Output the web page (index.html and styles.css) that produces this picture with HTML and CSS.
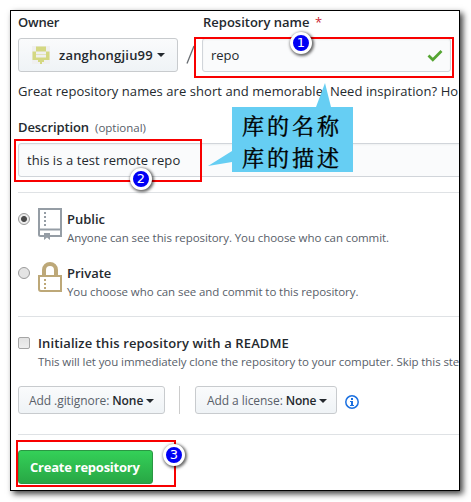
FILE: index.html
```html
<!DOCTYPE html>
<html lang="en">
<head>
<meta charset="utf-8">
<title>Create a new repository</title>
<link rel="stylesheet" href="styles.css">
</head>
<body>
<div class="stage">
<main class="frame">
  <div class="labels"><span class="t-owner strong">Owner</span><span class="t-name strong">Repository name <i class="star">*</i></span></div>
  <div class="fields">
    <div class="btn owner">
      <svg class="avatar" width="20" height="20" viewBox="0 0 20 20"><path fill="#f0f0f0" d="M1 1h18v18H1z"/><path fill="#d4d882" d="M5 1.500h10v5H5zM1.500 6.500H5v3h10v-3h3.500V15H13v2h-2v2H9v-2H7v-2H1.500z"/><path fill="#f0f0f0" d="M5 10h10v2.500H5z"/></svg>
      <span class="t-user strong">zanghongjiu99</span><b class="caret"></b>
    </div>
    <svg class="slash" width="9" height="20" viewBox="0 0 9 20"><path d="M1 18.500 8 1" stroke="#666b70" stroke-width="1.300"/></svg>
    <div class="input name"><span class="t-repo">repo</span>
      <svg width="16" height="14" viewBox="0 0 16 14"><path d="m1.500 7.500 4.300 4.300L14.500 3" fill="none" stroke="#55a532" stroke-width="2.700"/></svg></div>
  </div>
  <p class="hint"><span class="t-hint">Great repository names are short and memorable. Need inspiration? Ho</span></p>
  <p class="desc-label"><span class="t-desc strong">Description</span><span class="t-opt">(optional)</span></p>
  <div class="input desc"><span class="t-test">this is a test remote repo</span></div>
  <hr class="rule r1">
  <div class="choice public">
    <i class="radio on"></i>
    <svg width="24" height="32" viewBox="0 0 24 32" fill="none" stroke="#959da5"><path stroke-width="2" d="M6 28H2.500Q1 28 1 26.500V1h22v27H12M1 21.500h22"/><path fill="#959da5" stroke="none" d="M6 25h6v7l-3-2.500L6 32z"/><path stroke-width="2" stroke-dasharray="2 2" d="M7 4v15"/></svg>
    <div><p class="t-public strong">Public</p><p class="small t-any">Anyone can see this repository. You choose who can commit.</p></div>
  </div>
  <div class="choice private">
    <i class="radio"></i>
    <svg width="24" height="32" viewBox="0 0 24 32" fill="none" stroke="#bda878"><path stroke-width="2" d="M1 14h22v15H3Q1 29 1 27z"/><path stroke-width="4" d="M6 14V8a6 6 0 0 1 12 0v6"/><path stroke-width="2" stroke-dasharray="2 2" d="M7 17v10"/></svg>
    <div><p class="t-private strong">Private</p><p class="small t-you">You choose who can see and commit to this repository.</p></div>
  </div>
  <hr class="rule r2">
  <div class="init"><i class="check"></i><div><p class="t-init strong">Initialize this repository with a README</p><p class="small t-this">This will let you immediately clone the repository to your computer. Skip this ste</p></div></div>
  <div class="options">
    <div class="btn ignore"><span class="t-ign">Add .gitignore: <b>None</b></span><b class="caret"></b></div>
    <i class="divider"></i>
    <div class="btn license"><span class="t-lic">Add a license: <b>None</b></span><b class="caret"></b></div>
    <svg class="info" width="14" height="14" viewBox="0 0 14 14"><circle cx="7" cy="7" r="6.200" fill="none" stroke="#1b70e0" stroke-width="1.500"/><path fill="#1b70e0" d="M6 3h2v2H6zM5 6h3v4h1v1H5v-1h1V7H5z"/></svg>
  </div>
  <hr class="rule r3">
  <div class="create"><span class="t-create">Create repository</span></div>
</main>
<div class="mark m1"></div><div class="mark m2"></div><div class="mark m3"></div>
<div class="callout">
  <svg width="146" height="90" viewBox="0 0 146 90"><path fill="#66cef3" d="M24 24h84l9-24 6 24h22v65H24V79L0 83l24-15z"/></svg>
  <div class="cn"><p>库的名称</p><p>库的描述</p></div>
</div>
<b class="badge b1">1</b><b class="badge b2">2</b><b class="badge b3">3</b>
</div>
</body>
</html>
```
FILE: styles.css
```css
* { box-sizing: border-box; }
body { margin: 0; background: #fff; color: #24292e; font: 13px/20px "Open Sans", "Noto Sans", sans-serif; }
p { margin: 0; }
.stage { position: relative; width: 471px; height: 502px; overflow: hidden; padding: 10px; }
.frame { width: 450px; height: 481px; border: 1px solid #000; padding: 1px 0 0 7px; overflow: hidden; background: #fff; white-space: nowrap; }
.stage::before { content: ""; position: absolute; z-index: -1; left: 10px; top: 10px; width: 450px; height: 481px; box-shadow: 3px 3px 6px rgba(0,0,0,.75); }
.strong { font-weight: 600; }
.labels { display: flex; height: 26px; }
.labels .t-owner { width: 185px; letter-spacing: -.2px; }
.star { color: #cb2431; font-style: normal; font-weight: 400; margin-left: 2px; }
.fields { display: flex; align-items: center; height: 34px; }
.btn { display: flex; align-items: center; border: 1px solid #c8cbce; border-radius: 3px; background: linear-gradient(#fafbfc, #eff3f6); }
.caret { width: 0; height: 0; border: 4px solid transparent; border-top-color: #24292e; border-bottom: 0; margin-left: 4px; }
.owner { width: 160px; height: 34px; padding-left: 12px; }
.t-user { letter-spacing: .2px; }
.avatar { margin-right: 8px; }
.slash { margin: 0 7px 0 8px; }
.input { display: flex; align-items: center; height: 34px; border: 1px solid #d1d5da; border-radius: 3px; background: #fafbfc; box-shadow: inset 0 1px 2px rgba(27,31,35,.05); }
.name { width: 249px; padding: 0 7px 0 8px; justify-content: space-between; }
.hint { margin-top: 9px; letter-spacing: .06px; }
.desc-label { margin-top: 16px; height: 26px; }
.t-desc { letter-spacing: -.1px; }
.t-opt { font-size: 11.5px; color: #586069; margin-left: 6px; }
.desc { width: 460px; padding-left: 8px; letter-spacing: .08px; }
.rule { border: 0; height: 1px; background: #dfe2e5; margin: 0; }
.r1 { margin-top: 15px; }
.choice { display: flex; height: 39px; }
.public { margin-top: 16px; }
.private { margin-top: 15px; }
.choice svg { margin: -1px 5px 0 8px; flex: none; }
.radio { flex: none; width: 12px; height: 12px; border-radius: 50%; border: 1px solid #9a9a9a; background: #e4e4e4; margin-top: 4px; }
.on { background: radial-gradient(circle, #4a4a4a 0 2.5px, #ececec 3.5px); }
.choice p, .init p { height: 19px; }
.small { font-size: 11.5px; letter-spacing: -.08px; color: #586069; }
.r2 { margin-top: 14px; }
.init { display: flex; margin-top: 16px; height: 53px; }
.t-init { letter-spacing: .12px; }
.check { flex: none; width: 12px; height: 12px; border: 1px solid #a5a5a5; border-radius: 2px; background: linear-gradient(#e2e2e2, #eee); margin: 4px 8px 0 0; }
.options { display: flex; align-items: center; height: 28px; font-size: 12px; color: #586069; }
.options .btn { height: 28px; padding-left: 10px; }
.options .caret { margin: 2px 0 0 3px; }
.options span { letter-spacing: -.07px; position: relative; top: 1px; }
.options span b { font-weight: 600; color: #24292e; }
.ignore { width: 147px; }
.options .license { width: 142px; padding-left: 11px; }
.t-lic b { letter-spacing: -.2px; }
.divider { width: 1px; height: 28px; background: #ccc; margin: 0 15px 0 14px; }
.info { margin: 3px 0 0 8px; }
.r3 { margin-top: 20px; }
.create { margin-top: 15px; width: 135px; height: 34px; border: 1px solid #2a9743; border-radius: 3px; background: linear-gradient(#34d058, #28a745); display: flex; align-items: center; padding-left: 11px; color: #fff; font-weight: 700; letter-spacing: -.24px; }
.mark { position: absolute; border: 2px solid #f80000; }
.m1 { left: 194px; top: 37px; width: 260px; height: 41px; }
.m2 { left: 14px; top: 139px; width: 188px; height: 43px; }
.m3 { left: 16px; top: 440px; width: 160px; height: 47px; }
.callout { position: absolute; left: 208px; top: 83px; width: 146px; height: 90px; }
.cn { position: absolute; left: 34px; top: 26px; color: #000; font: 22px/32px "Noto Serif CJK SC", "Noto Sans CJK SC", serif; letter-spacing: 3px; white-space: nowrap; -webkit-text-stroke: .4px #000; }
.badge { position: absolute; width: 22px; height: 22px; border: 3px solid #fff; border-radius: 50%; background: #0000f5; color: #fff; font: 13px/16px "DejaVu Sans", sans-serif; text-align: center; box-shadow: 1px 1px 3px 1px rgba(0,0,0,.6); }
.b1 { left: 290px; top: 32px; }
.b2 { left: 130px; top: 168px; }
.b3 { left: 163px; top: 444px; }
```
